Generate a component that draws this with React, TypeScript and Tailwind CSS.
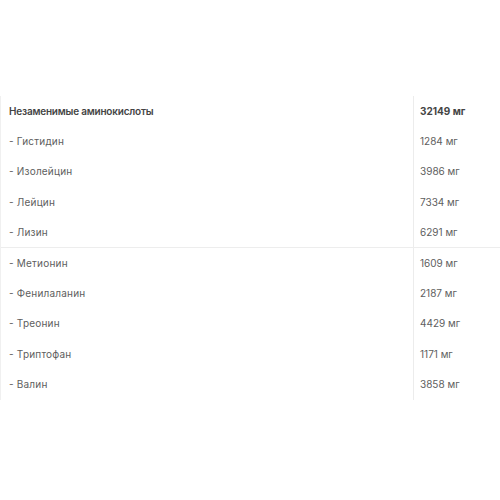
import React from "react";

const rows: [string, string][] = [
  ["- Гистидин", "1284 мг"],
  ["- Изолейцин", "3986 мг"],
  ["- Лейцин", "7334 мг"],
  ["- Лизин", "6291 мг"],
  ["- Метионин", "1609 мг"],
  ["- Фенилаланин", "2187 мг"],
  ["- Треонин", "4429 мг"],
  ["- Триптофан", "1171 мг"],
  ["- Валин", "3858 мг"],
];

export default function App() {
  return (
    <div className="w-[500px] h-[500px] bg-white pt-[96px]" style={{ fontFamily: "Inter, 'Noto Sans', sans-serif" }}>
      <div className="border-l border-[#f0f0f0]">
        <div className="flex h-[30.4px] items-center text-[10px] font-semibold text-[#444]">
          <div className="w-[412px] pl-[8px] tracking-[-0.2px]">Незаменимые аминокислоты</div>
          <div className="flex-1 self-stretch flex items-center border-l border-[#ececec] pl-[6px] font-bold">32149 мг</div>
        </div>
        {rows.map(([n, v], i) => (
          <div key={i} className={"flex h-[30.4px] items-center text-[10px] text-[#5e5e5e] " + (i === 3 ? "border-b border-[#ededed]" : "")}>
            <div className="w-[412px] pl-[8px] tracking-[0.2px]">{n}</div>
            <div className="flex-1 self-stretch flex items-center border-l border-[#ececec] pl-[6px]">{v}</div>
          </div>
        ))}
      </div>
    </div>
  );
}
